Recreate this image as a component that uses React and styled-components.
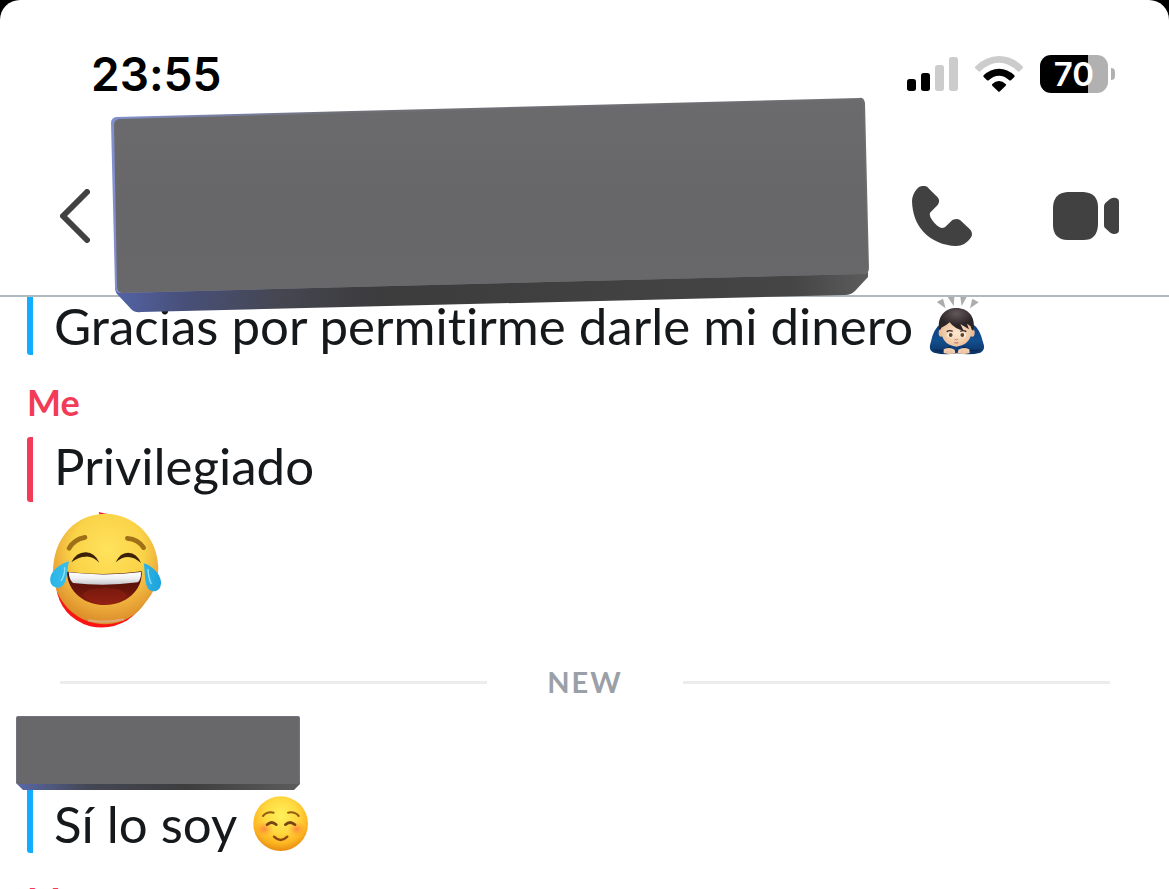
import React from "react";
import styled, { createGlobalStyle } from "styled-components";

const GlobalStyle = createGlobalStyle`
  * { box-sizing: border-box; }
  body { margin: 0; background: #000; overflow: hidden; }
`;

const BLUE = "#12adff";
const RED = "#f23c57";

const Screen = styled.div`
  display: flex;
  flex-direction: column;
  height: 100vh;
  overflow: hidden;
  background: #fff;
  border-radius: 20px 20px 0 0;
  color: #16191c;
  font-family: Lato, "Liberation Sans", sans-serif;
  font-variant-ligatures: none;
`;

const Header = styled.header`
  position: relative;
  z-index: 1;
  flex: none;
  border-bottom: 2px solid #b1b9bf;
`;

const StatusBar = styled.div`
  display: flex;
  align-items: center;
  justify-content: space-between;
  height: 137px;
  padding: 10px 54px 0 91px;
  font-family: Inter, sans-serif;
  font-weight: 600;
  color: #000;
`;

const Clock = styled.time`
  font-size: 46px;
  line-height: 56px;
`;

const Indicators = styled.div`
  display: flex;
  align-items: center;
  gap: 17px;
`;

const Battery = styled.div`
  display: flex;
  align-items: center;
  gap: 3px;
`;

const BatteryBody = styled.div`
  width: 68px;
  border-radius: 11px;
  background: linear-gradient(to right, #000 70%, #b1b1b1 70%);
  color: #fff;
  font-size: 33px;
  line-height: 38px;
  text-align: center;
`;

const BatteryTip = styled.div`
  width: 4px;
  height: 12px;
  border-radius: 0 4px 4px 0;
  background: #b1b1b1;
`;

const NavBar = styled.nav`
  display: flex;
  align-items: center;
  height: 158px;
  padding: 0 50px 0 60px;
`;

const IconButton = styled.button`
  display: block;
  flex: none;
  padding: 0;
  border: 0;
  background: none;
  color: #414141;
  cursor: pointer;
  svg { display: block; }
`;

const TitleSlot = styled.div`
  position: relative;
  flex: 1;
  align-self: stretch;
  margin: 0 43px 0 21px;
`;

const TitleCover = styled.svg`
  position: absolute;
  left: 0;
  top: -40px;
  width: 100%;
  height: 216px;
`;

const Actions = styled.div`
  display: flex;
  align-items: center;
  gap: 81px;
`;

const Conversation = styled.main`
  flex: 1;
  min-height: 0;
  overflow: hidden;
`;

const Sender = styled.h2`
  margin: 25px 0 13px;
  padding-left: 27px;
  font-size: 36px;
  font-weight: 700;
  line-height: 44px;
  color: ${RED};
`;

const Message = styled.div`
  display: flex;
  align-items: center;
  gap: 16px;
  margin-left: 27px;
  padding-left: 27px;
  padding-top: ${(p) => p.$top || 0}px;
  padding-bottom: ${(p) => p.$bottom || 0}px;
  background: linear-gradient(${(p) => p.$color}, ${(p) => p.$color}) left / 6px 100% no-repeat;
  border-radius: ${(p) => (p.$cut ? "0 0 0 3px" : "3px 0 0 3px")};
  svg { display: block; flex: none; }
`;

const Text = styled.p`
  margin: 0;
  font-size: 51px;
  line-height: 58px;
`;

const Sticker = styled.svg`
  display: block;
  margin: 10px 0 0 49px;
`;

const NewDivider = styled.div`
  display: grid;
  grid-template-columns: 1fr auto 1fr;
  align-items: center;
  gap: 60px;
  margin: 37px 59px 17px 60px;
  font-size: 29px;
  font-weight: 700;
  line-height: 34px;
  letter-spacing: 2px;
  color: #9a9fa8;
  &::before, &::after {
    content: "";
    height: 3px;
    background: #ececec;
  }
`;

const NameCover = styled.svg`
  display: block;
  margin-left: 16px;
`;

function Signal() {
  return (
    <svg width="51" height="36" viewBox="81 78 153 108" role="img" aria-label="Signal">
      <rect x="81" y="147" width="27" height="36" rx="8" />
      <rect x="123" y="129" width="27" height="54" rx="8" />
      <rect x="165" y="105" width="27" height="78" rx="8" fill="#ccc" />
      <rect x="207" y="81" width="27" height="102" rx="8" fill="#ccc" />
    </svg>
  );
}

function Wifi() {
  return (
    <svg width="48" height="36" viewBox="285 75 144 108" role="img" aria-label="Wi-Fi">
      <path d="M285 107 Q317 75 357 75 Q397 75 429 107 Q430 110 428 112 L419 121 Q416 123 413 121 Q387 95 357 95 Q327 95 301 121 Q298 123 295 121 L286 112 Q284 110 285 107Z" fill="#ccc" />
      <path d="M311 133 Q331 113 357 113 Q383 113 403 133 Q405 136 403 138 L393 148 Q390 150 387 147 Q373 134 357 134 Q341 134 327 147 Q324 150 321 148 L311 138 Q309 136 311 133Z" />
      <path d="M337 159 Q346 150 357 150 Q368 150 377 159 Q379 161 377 164 L360 181 Q357 184 354 181 L337 164 Q335 161 337 159Z" />
    </svg>
  );
}

function BigCover() {
  return (
    <TitleCover viewBox="0 0 758 216" preserveAspectRatio="none" aria-hidden="true">
      <defs>
        <linearGradient id="under">
          <stop offset="0" stopColor="#5363a6" />
          <stop offset="0.09" stopColor="#48507a" />
          <stop offset="0.22" stopColor="#454650" />
          <stop offset="0.35" stopColor="#3c3c3d" />
          <stop offset="0.9" stopColor="#454546" />
          <stop offset="1" stopColor="#5c5c5d" />
        </linearGradient>
        <linearGradient id="rim">
          <stop offset="0" stopColor="#8290cf" />
          <stop offset="0.3" stopColor="#707178" />
          <stop offset="1" stopColor="#6e6e70" />
        </linearGradient>
        <linearGradient id="face" x2="0" y2="1">
          <stop offset="0" stopColor="#6b6b6d" />
          <stop offset="0.5" stopColor="#67676a" />
          <stop offset="1" stopColor="#68686a" />
        </linearGradient>
      </defs>
      <path d="M4 190 L757 172 V180 L744 194 Q740 198 734 198 L30 215 Q24 216 20 212 L7 198 Q4 195 4 190Z" fill="url(#under)" />
      <path d="M5 20 L748 1 Q753 0 754 6 L758 171 Q758 177 752 177 L10 196 Q4 196 4 190 L0 26 Q0 21 5 20Z" fill="url(#rim)" />
      <path d="M8 22 L748 3 Q751 3 752 7 L757 171 Q757 175 751 177 L11 196 Q6 195 6 189 L3 28 Q3 23 8 22Z" fill="url(#face)" />
    </TitleCover>
  );
}

function SmallCover() {
  return (
    <NameCover width="284" height="74" viewBox="0 0 284 74" aria-hidden="true">
      <defs>
        <linearGradient id="under2">
          <stop offset="0" stopColor="#5a68a8" />
          <stop offset="0.25" stopColor="#444754" />
          <stop offset="0.6" stopColor="#3d3d3e" />
          <stop offset="1" stopColor="#5c5c5d" />
        </linearGradient>
      </defs>
      <path d="M0 65 H284 V68 L278 74 H7 L0 67Z" fill="url(#under2)" />
      <rect width="284" height="68" rx="2" fill="#717380" />
      <rect x="1" y="1" width="282" height="67" rx="1" fill="#68686a" />
    </NameCover>
  );
}

function Bowing() {
  return (
    <svg width="56" height="58" viewBox="57 21 168 174" role="img" aria-label="Person bowing">
      <defs>
        <linearGradient id="coat" x2="0" y2="1">
          <stop offset="0" stopColor="#123f7c" />
          <stop offset="0.55" stopColor="#124f8f" />
          <stop offset="1" stopColor="#0b3263" />
        </linearGradient>
        <radialGradient id="skin">
          <stop offset="0" stopColor="#ffe8cf" />
          <stop offset="1" stopColor="#edc29d" />
        </radialGradient>
        <radialGradient id="hair" cy="0.25">
          <stop offset="0" stopColor="#62585a" />
          <stop offset="1" stopColor="#2c2528" />
        </radialGradient>
      </defs>
      <path d="M80 36 L99 26 L107 55Z M113 21 L133 21 L131 48Z M151 21 L170 21 L155 48Z M187 26 L206 37 L180 55Z" fill="#acacae" />
      <path d="M92 102 Q70 116 62 158 Q54 181 72 188 Q104 196 140 190 Q182 196 211 188 Q228 180 219 157 Q210 116 188 102Z" fill="url(#coat)" />
      <path d="M73 180 Q101 187 121 170 M207 180 Q180 187 160 170" fill="none" stroke="#0a2b56" strokeWidth="5" />
      <ellipse cx="93" cy="128" rx="7" ry="12" fill="#e8bc98" />
      <ellipse cx="187" cy="128" rx="7" ry="12" fill="#e8bc98" />
      <path d="M93 102 Q88 164 139 170 Q190 164 187 102 Q139 76 93 102Z" fill="url(#skin)" />
      <path d="M87 119 C82 78 105 54 139 54 C175 54 197 80 191 121 Q185 124 182 109 L171 101 L177 118 L151 102 L161 122 Q134 117 119 97 Q107 108 94 113 Q93 121 87 119Z" fill="url(#hair)" />
      <path d="M110 125 Q119 119 128 124 M151 124 Q160 119 169 125" fill="none" stroke="#34282a" strokeWidth="4" />
      <ellipse cx="121" cy="135" rx="9" ry="7" fill="#fff" />
      <ellipse cx="158" cy="135" rx="9" ry="7" fill="#fff" />
      <circle cx="122" cy="135" r="6" fill="#65431e" />
      <circle cx="157" cy="135" r="6" fill="#65431e" />
      <path d="M134 148 Q139 151 144 148" fill="none" stroke="#c38665" strokeWidth="3" />
      <path d="M133 158 Q139 160 145 158" fill="none" stroke="#bc6655" strokeWidth="3" />
      <path d="M101 178 Q119 170 134 179 L136 190 Q118 194 101 189Z M178 178 Q161 170 145 179 L143 190 Q162 194 179 189Z" fill="#f2cdad" />
      <path d="M112 183 V190 M122 182 V191 M157 182 V191 M168 183 V190" stroke="#dda986" strokeWidth="2" />
    </svg>
  );
}

function Joy() {
  return (
    <Sticker width="112" height="116" viewBox="57 36 336 348" role="img" aria-label="Face with tears of joy">
      <defs>
        <radialGradient id="joy" cx="0.52" cy="0.33" r="0.68">
          <stop offset="0" stopColor="#ffe25c" />
          <stop offset="0.5" stopColor="#fad348" />
          <stop offset="0.8" stopColor="#e9a537" />
          <stop offset="1" stopColor="#d98927" />
        </radialGradient>
        <linearGradient id="mouth" x2="0" y2="1">
          <stop offset="0" stopColor="#451007" />
          <stop offset="0.6" stopColor="#6c160b" />
          <stop offset="1" stopColor="#8c2012" />
        </linearGradient>
        <linearGradient id="teeth" x2="0" y2="1">
          <stop offset="0" stopColor="#fff" />
          <stop offset="0.5" stopColor="#f0f0f2" />
          <stop offset="1" stopColor="#c4c6cb" />
        </linearGradient>
        <linearGradient id="tear">
          <stop offset="0" stopColor="#29b4e6" />
          <stop offset="0.5" stopColor="#62d6f4" />
          <stop offset="1" stopColor="#1ba3dc" />
        </linearGradient>
      </defs>
      <path d="M206 36 L235 43 L210 48Z" fill="#f3232b" />
      <path d="M78 260 Q90 350 180 379 Q240 392 292 361 Q325 339 352 290Z" fill="#fa1414" />
      <path d="M226 41 C314 42 384 112 385 205 C383 249 372 279 348 305 C323 346 278 370 226 373 C145 371 86 315 71 242 C58 134 122 42 226 41Z" fill="url(#joy)" />
      <path d="M177 361 Q228 370 279 358" fill="none" stroke="#dda978" strokeWidth="7" strokeLinecap="round" />
      <path d="M117 145 Q132 118 165 112 M292 115 Q325 118 341 143" fill="none" stroke="#a07018" strokeWidth="14" strokeLinecap="round" />
      <path d="M124 187 Q139 156 168 157 Q194 158 208 188 Q187 168 167 170 Q145 170 124 187Z M257 187 Q269 159 294 158 Q321 159 333 189 Q314 171 294 171 Q276 171 257 187Z" fill="#3c2108" />
      <path d="M111 215 Q226 229 335 214 C339 273 286 315 226 315 C164 315 112 276 111 215Z" fill="url(#mouth)" />
      <path d="M156 284 Q182 260 214 266 Q227 257 239 266 Q271 261 293 286 Q264 315 226 315 Q184 313 156 284Z" fill="#a42916" opacity="0.3" />
      <path d="M116 217 Q226 230 333 216 Q334 239 323 247 Q226 260 129 249 Q118 241 116 217Z" fill="url(#teeth)" />
      <path d="M117 184 C92 191 65 211 61 233 C58 255 72 264 86 263 C113 260 110 213 117 184Z M341 190 C366 197 390 220 393 245 C394 268 381 275 368 274 C340 269 347 220 341 190Z" fill="url(#tear)" />
      <path d="M104 202 Q105 226 93 243 M354 207 Q355 234 364 252" fill="none" stroke="#8de4f8" strokeWidth="4" />
    </Sticker>
  );
}

function Smile() {
  return (
    <svg width="56" height="56" viewBox="751 290 168 168" role="img" aria-label="Smiling face">
      <defs>
        <radialGradient id="smile" cy="0.35" r="0.64">
          <stop offset="0" stopColor="#fff15b" />
          <stop offset="0.5" stopColor="#ffd83f" />
          <stop offset="0.8" stopColor="#fdb622" />
          <stop offset="1" stopColor="#e88f12" />
        </radialGradient>
        <radialGradient id="blush">
          <stop offset="0" stopColor="#ff6542" stopOpacity="0.65" />
          <stop offset="1" stopColor="#ff9632" stopOpacity="0" />
        </radialGradient>
      </defs>
      <circle cx="834" cy="373" r="82" fill="url(#smile)" />
      <ellipse cx="785" cy="389" rx="28" ry="24" fill="url(#blush)" />
      <ellipse cx="882" cy="389" rx="28" ry="24" fill="url(#blush)" />
      <path d="M781 350 Q793 336 813 340 M856 340 Q876 336 888 350" fill="none" stroke="#945c10" strokeWidth="6" strokeLinecap="round" />
      <path d="M793 376 Q807 363 821 376 M848 376 Q862 363 877 376" fill="none" stroke="#764515" strokeWidth="8" strokeLinecap="round" />
      <path d="M814 412 Q834 432 854 412" fill="none" stroke="#8b4a12" strokeWidth="7" strokeLinecap="round" />
    </svg>
  );
}

export default function App() {
  return (
    <Screen>
      <GlobalStyle />
      <Header>
        <StatusBar>
          <Clock>23:55</Clock>
          <Indicators>
            <Signal />
            <Wifi />
            <Battery>
              <BatteryBody>70</BatteryBody>
              <BatteryTip />
            </Battery>
          </Indicators>
        </StatusBar>
        <NavBar>
          <IconButton aria-label="Back">
            <svg width="30" height="54" viewBox="0 0 30 54">
              <path d="M27 3 L3 27 L27 51" fill="none" stroke="currentColor" strokeWidth="6" strokeLinecap="round" strokeLinejoin="round" />
            </svg>
          </IconButton>
          <TitleSlot>
            <BigCover />
          </TitleSlot>
          <Actions>
            <IconButton aria-label="Voice call">
              <svg width="60" height="60" viewBox="96 468 180 180" fill="currentColor">
                <path d="M128 468 C136 467 143 470 147 476 L172 501 C179 508 179 517 173 525 L153 545 C148 549 149 555 151 561 C158 575 168 585 179 592 C186 596 193 594 198 589 L214 573 C222 566 233 565 241 571 L268 596 C278 605 278 616 271 625 C260 640 247 648 228 648 C190 646 155 632 130 605 C108 581 97 550 96 513 C97 495 106 481 116 472 C119 470 124 468 128 468Z" />
              </svg>
            </IconButton>
            <IconButton aria-label="Video call">
              <svg width="66" height="48" viewBox="519 486 198 144" fill="currentColor">
                <path d="M563 486 H610 Q654 488 654 532 V584 Q652 630 610 630 H563 Q519 628 519 584 V532 Q521 488 563 486Z" />
                <path d="M672 532 Q671 524 676 519 L690 507 Q703 500 714 507 Q717 510 717 516 V600 Q717 606 714 608 Q703 616 691 608 L676 595 Q671 591 672 583Z" />
              </svg>
            </IconButton>
          </Actions>
        </NavBar>
      </Header>
      <Conversation>
        <Message $color={BLUE} $cut>
          <Text>Gracias por permitirme darle mi dinero</Text>
          <Bowing />
        </Message>
        <Sender>Me</Sender>
        <Message $color={RED} $bottom={7}>
          <Text>Privilegiado</Text>
        </Message>
        <Joy />
        <NewDivider>NEW</NewDivider>
        <SmallCover />
        <Message $color={BLUE} $top={5} $cut>
          <Text>Sí lo soy</Text>
          <Smile />
        </Message>
        <Sender>Me</Sender>
      </Conversation>
    </Screen>
  );
}
